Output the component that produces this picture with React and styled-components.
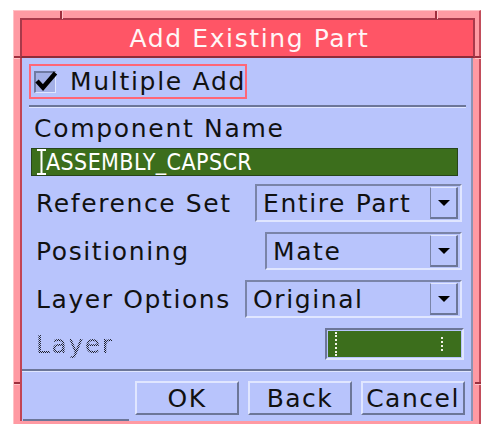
import React from 'react';
import styled, { createGlobalStyle } from 'styled-components';

const Global = createGlobalStyle`
  html, body { margin: 0; padding: 0; background: #ffffff; }
  body {
    width: 482px; height: 424px; overflow: hidden;
    font-family: "DejaVu Sans", "Liberation Sans", sans-serif;
    color: #111111;
  }
`;

const Page = styled.div`
  width: 482px; height: 424px; box-sizing: border-box;
  padding: 10px 1px 0 13px; overflow: hidden; background: #fff;
`;

/* Window manager frame around the dialog */
const Frame = styled.div`
  position: relative;
  height: 414px; box-sizing: border-box;
  background: #ff9aa3;
  border-top: 1px solid #ffc2c6;
  border-left: 1px solid #ffc2c6;
  border-right: 2px solid #c24d5b;
  padding: 7px 4px 3px 6px;
  display: flex; flex-direction: column;
`;

const Notch = styled.span`
  position: absolute;
  background: #9e2f3d;
  ${p => p.$side === 'top' && `left:${p.$at}px; top:0; width:2px; height:8px; box-shadow:1px 0 0 #ffc2c6;`}
  ${p => p.$side === 'left' && `top:${p.$at}px; left:0; height:2px; width:6px; box-shadow:0 1px 0 #ffc2c6;`}
  ${p => p.$side === 'right' && `top:${p.$at}px; right:-2px; height:2px; width:6px; box-shadow:0 1px 0 #ffc2c6;`}
`;

const TitleBar = styled.div`
  height: 36px;
  background: #ff5566;
  border: 2px solid #a9394a;
  border-bottom-color: #8e2c3a;
  color: #fff6f6;
  font-size: 25px; letter-spacing: 1.6px;
  display: flex; align-items: center; justify-content: center;
  padding-left: 4px;
`;

const Body = styled.div`
  position: relative;
  flex: 1;
  margin-right: 2px;
  background: #b8c4fc;
  border-left: 2px solid #c24454;
  border-right: 2px solid #8a93b4;
  display: flex; flex-direction: column;
  &::after {
    content: '';
    position: absolute; left: 1px; bottom: 0;
    width: 106px; height: 2px; background: #6c7698;
  }
`;

const CheckGroup = styled.label`
  margin: 6px 0 0 7px;
  width: 218px; height: 35px; box-sizing: border-box;
  border: 2px solid #ff6677;
  display: flex; align-items: center;
  padding-left: 3px; gap: 14px;
  white-space: nowrap;
  font-size: 25px; letter-spacing: 1.7px;
`;

const Box = styled.span`
  position: relative;
  flex: none;
  width: 22px; height: 22px; box-sizing: border-box;
  background: #a4b0e6;
  border-top: 2px solid #6f7aa2; border-left: 2px solid #6f7aa2;
  border-bottom: 1px solid #e0e6ff; border-right: 1px solid #e0e6ff;
  svg { position: absolute; left: -1px; top: -3px; }
`;

const Separator = styled.div`
  margin: ${p => p.$m};
  border-top: 2px solid #6c7698;
  border-bottom: 1px solid #dfe5ff;
`;

const Caption = styled.div`
  height: 40px; padding-left: 12px;
  display: flex; align-items: center;
  font-size: 25px; letter-spacing: 1.7px;
`;

const NameField = styled.div`
  margin-left: 9px; width: 427px; height: 28px; box-sizing: border-box;
  background: #3c6e1c;
  border: 1px solid #27451a;
  display: flex; align-items: center; padding-left: 5px;
  color: #ffffff;
  font-family: "DejaVu Sans Condensed", "DejaVu Sans", sans-serif;
  font-size: 23px; letter-spacing: 0.4px;
  svg { flex: none; }
`;

const Rows = styled.div`
  margin-top: 8px;
  display: flex; flex-direction: column; gap: 10px;
`;

const Row = styled.div`
  height: ${p => p.$h}px;
  padding: 0 9px 0 14px;
  display: flex; align-items: center; justify-content: space-between;
  white-space: nowrap;
  font-size: 25px; letter-spacing: 1.6px;
`;

/* Insensitive label: stippled text */
const Disabled = styled.span`
  color: transparent;
  background: repeating-conic-gradient(#1c1e2a 0 25%, transparent 0 50%) 0 0 / 2px 2px;
  -webkit-background-clip: text;
  background-clip: text;
`;

const Select = styled.div`
  width: ${p => p.$w}px; height: 38px; box-sizing: border-box;
  border-top: 2px solid #7a84a8; border-left: 2px solid #7a84a8;
  border-bottom: 2px solid #e0e6ff; border-right: 2px solid #e0e6ff;
  display: flex; align-items: center;
  padding: 0 2px 0 6px;
`;

const SelectText = styled.span` flex: 1; `;

const ArrowButton = styled.span`
  width: 28px; height: 32px; box-sizing: border-box;
  border-left: 1px solid #7a84a8; border-top: 1px solid #e0e6ff;
  border-bottom: 2px solid #6c7698; border-right: 2px solid #6c7698;
  display: flex; align-items: center; justify-content: center;
  &::before {
    content: '';
    border-top: 6px solid #000;
    border-left: 6px solid transparent;
    border-right: 6px solid transparent;
  }
`;

const LayerField = styled.div`
  width: 139px; height: 32px; box-sizing: border-box;
  border-top: 2px solid #6c7698; border-left: 2px solid #6c7698;
  border-bottom: 2px solid #e0e6ff; border-right: 2px solid #e0e6ff;
  padding: 1px;
  margin-right: -2px;
  display: flex;
`;

const LayerInner = styled.div`
  flex: 1; background: #3c6e1c;
  display: flex; align-items: center; justify-content: space-between;
  padding: 0 18px 0 7px;
`;

const DotMark = styled.span`
  width: 0; height: ${p => p.$h}px;
  border-left: 2px dotted #f4f4e8;
`;

const ButtonBar = styled.div`
  flex: 1;
  display: flex; justify-content: flex-end; align-items: flex-start;
  gap: 9px; padding: 9px 6px 0 0;
`;

const Button = styled.button`
  width: 104px; height: 34px; box-sizing: border-box;
  background: #b8c4fc;
  border-top: 2px solid #e0e6ff; border-left: 2px solid #e0e6ff;
  border-bottom: 2px solid #6c7698; border-right: 2px solid #6c7698;
  font-family: "DejaVu Sans", sans-serif;
  font-size: 25px; letter-spacing: 1.5px; color: #111;
  padding: 0;
  display: flex; align-items: center; justify-content: center;
`;

const Cursor = () => (
  <svg width="9" height="26" viewBox="0 0 9 26">
    <path d="M0 1h9M0 25h9M4.5 1v24" stroke="#ffffff" strokeWidth="2" fill="none" />
  </svg>
);

const Check = () => (
  <svg width="24" height="24" viewBox="0 0 24 24">
    <path d="M2 11 L8 17.5 L20.5 3" stroke="#000" strokeWidth="4.5" fill="none" strokeLinejoin="miter" />
  </svg>
);

const selects = [
  { label: 'Reference Set', value: 'Entire Part', w: 207 },
  { label: 'Positioning', value: 'Mate', w: 197 },
  { label: 'Layer Options', value: 'Original', w: 217 },
];

export default function App() {
  return (
    <>
      <Global />
      <Page>
        <Frame>
          <Notch $side="top" $at={46} />
          <Notch $side="top" $at={421} />
          <Notch $side="left" $at={45} />
          <Notch $side="left" $at={371} />
          <Notch $side="right" $at={45} />
          <Notch $side="right" $at={371} />
          <TitleBar>Add Existing Part</TitleBar>
          <Body>
            <CheckGroup>
              <Box><Check /></Box>
              Multiple Add
            </CheckGroup>
            <Separator $m="6px 5px 0 7px" />
            <Caption>Component Name</Caption>
            <NameField>
              <Cursor />
              ASSEMBLY_CAPSCR
            </NameField>
            <Rows>
              {selects.map(s => (
                <Row key={s.label} $h={38}>
                  <span>{s.label}</span>
                  <Select $w={s.w}>
                    <SelectText>{s.value}</SelectText>
                    <ArrowButton />
                  </Select>
                </Row>
              ))}
              <Row $h={32}>
                <Disabled>Layer</Disabled>
                <LayerField>
                  <LayerInner>
                    <DotMark $h={24} />
                    <DotMark $h={14} />
                  </LayerInner>
                </LayerField>
              </Row>
            </Rows>
            <Separator $m="9px 0 0 0" />
            <ButtonBar>
              <Button>OK</Button>
              <Button>Back</Button>
              <Button>Cancel</Button>
            </ButtonBar>
          </Body>
        </Frame>
      </Page>
    </>
  );
}
